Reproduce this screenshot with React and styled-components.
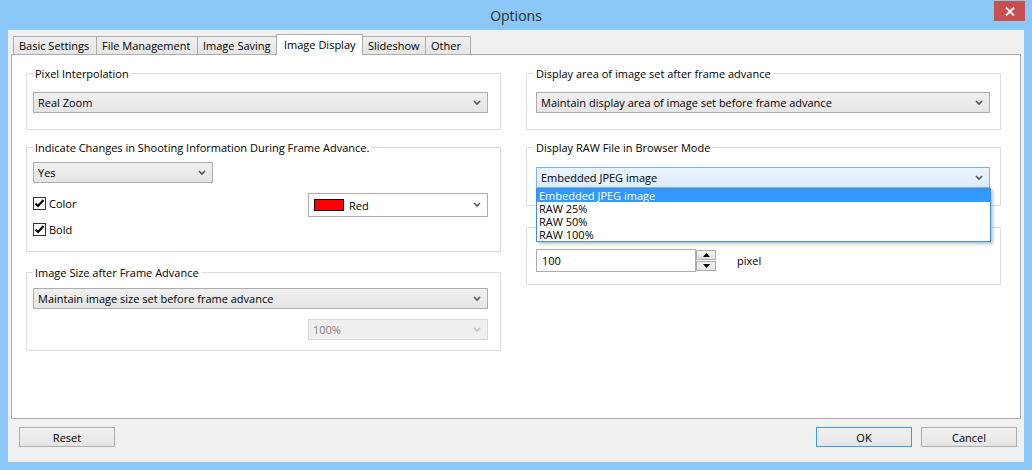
import React from 'react';
import styled, { createGlobalStyle, css } from 'styled-components';

const GlobalStyle = createGlobalStyle`
  html, body { margin: 0; padding: 0; }
  body {
    font-family: "Open Sans", "Noto Sans", sans-serif;
    font-size: 11px;
    color: #000;
  }
  * { box-sizing: border-box; }
`;

const Window = styled.div`
  width: 1032px;
  height: 470px;
  background: #8bc7f7;
  display: flex;
  flex-direction: column;
  overflow: hidden;
  font-family: "Open Sans", "Noto Sans", sans-serif;
  font-size: 11px;
`;

const TitleBar = styled.div`
  height: 30px;
  display: grid;
  grid-template-columns: 1fr auto 1fr;
  align-items: start;
`;

const Title = styled.div`
  grid-column: 2;
  font-size: 14px;
  line-height: 30px;
  padding-top: 1px;
  color: #2b2b2b;
`;

const CloseButton = styled.div`
  grid-column: 3;
  justify-self: end;
  margin: 1px 7px 0 0;
  width: 31px;
  height: 20px;
  background: #c75050;
  display: flex;
  align-items: center;
  justify-content: center;
`;

const Client = styled.div`
  flex: 1;
  margin: 0 8px 8px;
  background: #f0f0f0;
  display: flex;
  flex-direction: column;
  padding: 4px 3px 0;
`;

const TabStrip = styled.div`
  display: flex;
  align-items: flex-end;
  height: 20px;
  padding-left: 2px;
  position: relative;
  z-index: 1;
`;

const Tab = styled.div`
  width: ${p => p.$w}px;
  height: 18px;
  margin-left: -1px;
  border: 1px solid #acacac;
  border-bottom: none;
  background: linear-gradient(#f0f0f0, #e5e5e5);
  display: flex;
  align-items: center;
  padding-left: 5px;
  white-space: nowrap;
  &:first-child { margin-left: 0; }
  ${p => p.$active && css`
    height: 21px;
    margin-bottom: -1px;
    background: #fff;
    padding-left: 7px;
    padding-bottom: 1px;
  `}
`;

const Panel = styled.div`
  height: 365px;
  border: 1px solid #acacac;
  background: #fff;
  display: grid;
  grid-template-columns: 475px 475px;
  column-gap: 25px;
  align-items: start;
  padding: 11px 0 0 14px;
`;

const Column = styled.div`
  display: flex;
  flex-direction: column;
`;

const Group = styled.fieldset`
  margin: ${p => p.$mt || 0}px 0 0;
  border: 1px solid #dcdcdc;
  padding: ${p => p.$pad};
  min-width: 0;
`;

const Legend = styled.legend`
  font-size: 11px;
  line-height: 15px;
  padding: 0 2px;
  margin-left: ${p => p.$ml}px;
`;

const ComboWrap = styled.div`
  position: relative;
  width: ${p => (p.$w ? `${p.$w}px` : '100%')};
  margin-top: ${p => p.$mt || 0}px;
  margin-left: ${p => (p.$right ? 'auto' : '0')};
`;

const Combo = styled.div`
  height: ${p => p.$h || 21}px;
  border: 1px solid #acacac;
  background: linear-gradient(#f0f0f0, #e5e5e5);
  display: flex;
  align-items: center;
  padding: 0 6px 0 4px;
  white-space: nowrap;
  ${p => p.$variant === 'focus' && css`
    border-color: #7eb4ea;
    background: linear-gradient(#ecf4fc, #dcecfc);
  `}
  ${p => p.$variant === 'white' && css`
    background: #fff;
    padding-left: 5px;
  `}
  ${p => p.$variant === 'disabled' && css`
    border-color: #d9d9d9;
    background: #efefef;
    color: #838383;
  `}
`;

const ComboText = styled.span`
  flex: 1;
`;

const Swatch = styled.span`
  width: 30px;
  height: 12px;
  background: #ff0000;
  border: 1px solid #000;
  margin-right: 5px;
`;

const DropList = styled.div`
  position: absolute;
  top: 100%;
  left: 0;
  right: -1px;
  border: 1px solid #3d8ee0;
  background: #fff;
  box-shadow: 2px 2px 3px rgba(0, 0, 0, 0.25);
  z-index: 5;
`;

const DropItem = styled.div`
  height: 13px;
  line-height: 13px;
  padding-left: 2px;
  ${p => p.$selected && css`
    background: #3399ff;
    color: #fff;
  `}
`;

const OptionRow = styled.div`
  display: grid;
  grid-template-columns: 1fr 180px;
  margin-top: 10px;
  align-items: start;
`;

const CheckList = styled.div`
  display: flex;
  flex-direction: column;
  gap: 13px;
  padding-top: 4px;
`;

const CheckItem = styled.label`
  display: flex;
  align-items: center;
  height: 13px;
  gap: 3px;
`;

const CheckBox = styled.span`
  width: 13px;
  height: 13px;
  border: 1px solid #333;
  background: #fff;
  display: flex;
  align-items: center;
  justify-content: center;
`;

const SpinRow = styled.div`
  display: flex;
  align-items: center;
`;

const SpinInput = styled.div`
  width: 160px;
  height: 23px;
  border: 1px solid #abadb3;
  background: #fff;
  display: flex;
  align-items: center;
  padding-left: 5px;
`;

const SpinButtons = styled.div`
  display: flex;
  flex-direction: column;
  gap: 1px;
  height: 23px;
  padding: 1px 0;
`;

const SpinButton = styled.div`
  width: 20px;
  flex: 1;
  border: 1px solid #acacac;
  background: linear-gradient(#f0f0f0, #e5e5e5);
  display: flex;
  align-items: center;
  justify-content: center;
`;

const Unit = styled.span`
  margin-left: 21px;
`;

const ButtonRow = styled.div`
  display: flex;
  margin-top: 8px;
  padding: 0 4px 0 8px;
`;

const Button = styled.div`
  width: 96px;
  height: 20px;
  border: 1px solid ${p => (p.$default ? '#3399ff' : '#acacac')};
  background: linear-gradient(#f0f0f0, #e5e5e5);
  display: flex;
  align-items: center;
  justify-content: center;
  margin-left: ${p => p.$ml || 0};
`;

const Chevron = ({ disabled }) => (
  <svg width="8" height="6" viewBox="0 0 8 6">
    <path d="M1 1 L4 4 L7 1" fill="none" stroke={disabled ? '#c0c0c0' : '#555'} strokeWidth="1.6" />
  </svg>
);

const Check = () => (
  <svg width="11" height="11" viewBox="0 0 11 11">
    <path d="M1.5 5.5 L4 8 L9.5 2" fill="none" stroke="#000" strokeWidth="2.2" />
  </svg>
);

const Triangle = ({ up }) => (
  <svg width="7" height="4" viewBox="0 0 7 4">
    <path d={up ? 'M0 4 L3.5 0 L7 4 Z' : 'M0 0 L3.5 4 L7 0 Z'} fill="#000" />
  </svg>
);

const tabs = [
  { label: 'Basic Settings', w: 84 },
  { label: 'File Management', w: 102 },
  { label: 'Image Saving', w: 80 },
  { label: 'Image Display', w: 87, active: true },
  { label: 'Slideshow', w: 64 },
  { label: 'Other', w: 46 },
];

const rawOptions = ['Embedded JPEG image', 'RAW 25%', 'RAW 50%', 'RAW 100%'];

const ComboBox = ({ value, variant, h, children }) => (
  <Combo $variant={variant} $h={h}>
    {children}
    <ComboText>{value}</ComboText>
    <Chevron disabled={variant === 'disabled'} />
  </Combo>
);

export default function App() {
  return (
    <>
      <GlobalStyle />
      <Window>
        <TitleBar>
          <Title>Options</Title>
          <CloseButton>
            <svg width="10" height="9" viewBox="0 0 10 9">
              <path d="M1 0.5 L9 8.5 M9 0.5 L1 8.5" stroke="#fff" strokeWidth="1.8" />
            </svg>
          </CloseButton>
        </TitleBar>
        <Client>
          <TabStrip>
            {tabs.map(t => (
              <Tab key={t.label} $w={t.w} $active={t.active}>{t.label}</Tab>
            ))}
          </TabStrip>
          <Panel>
            <Column>
              <Group $pad="11px 12px 16px 6px">
                <Legend $ml={0}>Pixel Interpolation</Legend>
                <ComboWrap>
                  <ComboBox value="Real Zoom" />
                </ComboWrap>
              </Group>
              <Group $mt={10} $pad="7px 12px 15px 6px">
                <Legend $ml={0}>Indicate Changes in Shooting Information During Frame Advance.</Legend>
                <ComboWrap $w={180}>
                  <ComboBox value="Yes" />
                </ComboWrap>
                <OptionRow>
                  <CheckList>
                    <CheckItem><CheckBox><Check /></CheckBox>Color</CheckItem>
                    <CheckItem><CheckBox><Check /></CheckBox>Bold</CheckItem>
                  </CheckList>
                  <ComboBox value="Red" variant="white" h={24}>
                    <Swatch />
                  </ComboBox>
                </OptionRow>
              </Group>
              <Group $mt={13} $pad="8px 12px 10px 6px">
                <Legend $ml={0}>Image Size after Frame Advance</Legend>
                <ComboWrap>
                  <ComboBox value="Maintain image size set before frame advance" />
                </ComboWrap>
                <ComboWrap $w={180} $mt={10} $right>
                  <ComboBox value="100%" variant="disabled" />
                </ComboWrap>
              </Group>
            </Column>
            <Column>
              <Group $pad="11px 10px 16px 9px">
                <Legend $ml={-2}>Display area of image set after frame advance</Legend>
                <ComboWrap>
                  <ComboBox value="Maintain display area of image set before frame advance" />
                </ComboWrap>
              </Group>
              <Group $mt={10} $pad="12px 10px 17px 9px">
                <Legend $ml={-2}>Display RAW File in Browser Mode</Legend>
                <ComboWrap>
                  <ComboBox value="Embedded JPEG image" variant="focus" />
                  <DropList>
                    {rawOptions.map((o, i) => (
                      <DropItem key={o} $selected={i === 0}>{o}</DropItem>
                    ))}
                  </DropList>
                </ComboWrap>
              </Group>
              <Group $mt={21} $pad="21px 10px 12px 9px">
                <SpinRow>
                  <SpinInput>100</SpinInput>
                  <SpinButtons>
                    <SpinButton><Triangle up /></SpinButton>
                    <SpinButton><Triangle /></SpinButton>
                  </SpinButtons>
                  <Unit>pixel</Unit>
                </SpinRow>
              </Group>
            </Column>
          </Panel>
          <ButtonRow>
            <Button>Reset</Button>
            <Button $default $ml="auto">OK</Button>
            <Button $ml="9px">Cancel</Button>
          </ButtonRow>
        </Client>
      </Window>
    </>
  );
}
